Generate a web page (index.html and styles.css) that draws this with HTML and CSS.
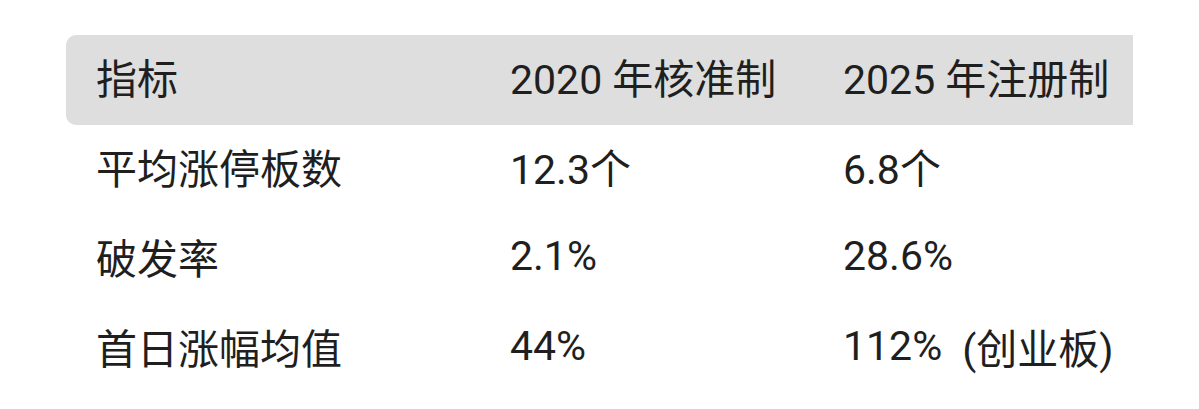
FILE: index.html
```html
<!DOCTYPE html>
<html lang="zh-CN">
<head>
<meta charset="utf-8">
<title>对比</title>
<link rel="stylesheet" href="styles.css">
</head>
<body>
<div class="wrap">
  <div class="table">
    <div class="row head">
      <div class="cell">指标</div>
      <div class="cell">2020 年核准制</div>
      <div class="cell">2025 年注册制</div>
    </div>
    <div class="row">
      <div class="cell">平均涨停板数</div>
      <div class="cell">12.3个</div>
      <div class="cell">6.8个</div>
    </div>
    <div class="row">
      <div class="cell">破发率</div>
      <div class="cell">2.1%</div>
      <div class="cell">28.6%</div>
    </div>
    <div class="row">
      <div class="cell">首日涨幅均值</div>
      <div class="cell">44%</div>
      <div class="cell">112%<span class="note">(创业板)</span></div>
    </div>
  </div>
</div>
</body>
</html>
```
FILE: styles.css
```css
html, body {
  margin: 0;
  padding: 0;
  background: #ffffff;
}
body {
  font-family: Roboto, "Noto Sans CJK SC", sans-serif;
  color: #1f1f1f;
  font-size: 41px;
}
.wrap {
  padding: 35px 0 0 66px;
}
.table {
  width: 1067px;
}
.row {
  display: grid;
  grid-template-columns: 414px 333px 320px;
  height: 90px;
}
.row.head {
  background: #dedede;
  border-radius: 10px 0 0 10px;
}
.cell {
  display: flex;
  align-items: center;
  padding: 0 30px 8px;
  white-space: nowrap;
}
.note {
  margin-left: 20px;
}
```
